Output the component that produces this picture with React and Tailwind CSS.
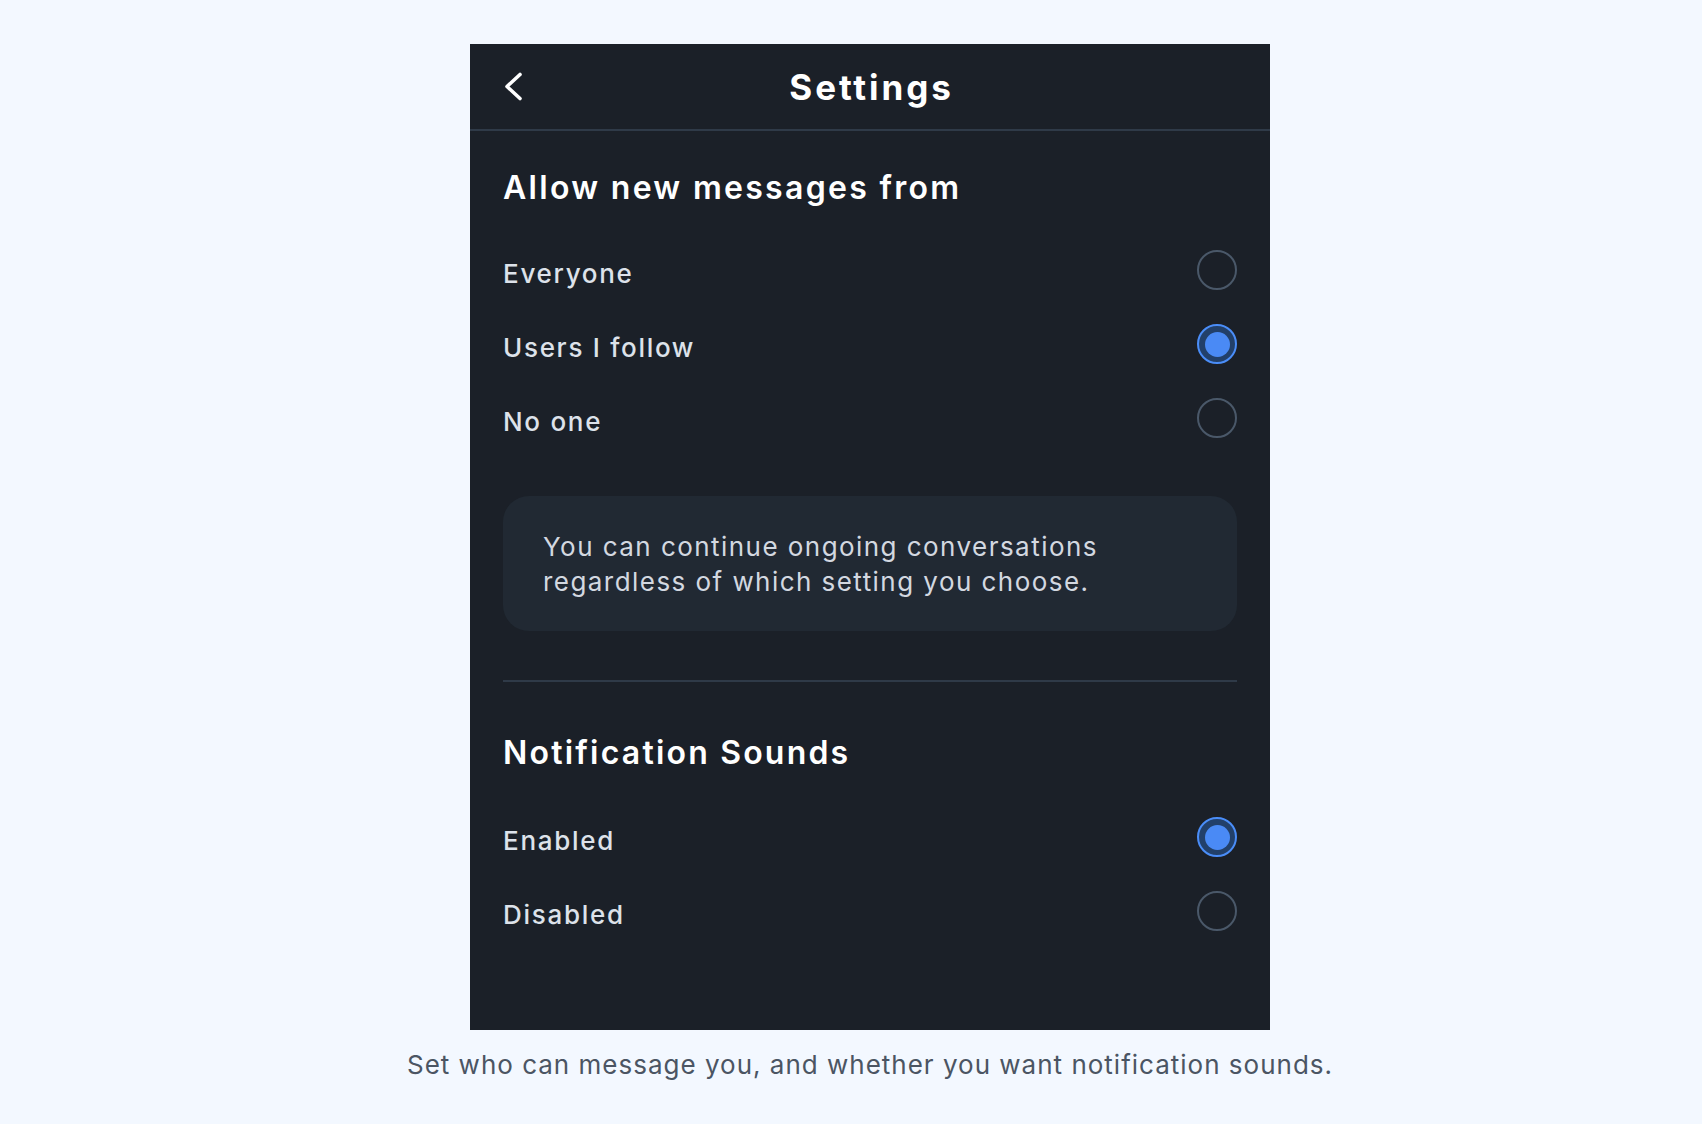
import React from "react";

function Radio({ checked }) {
  if (checked) {
    return (
      <div className="w-[40px] h-[40px] shrink-0 rounded-full border-2 border-[#4a8df8] bg-[#22406a] flex items-center justify-center">
        <div className="w-[25px] h-[25px] rounded-full bg-[#4a8af5]" />
      </div>
    );
  }
  return <div className="w-[40px] h-[40px] shrink-0 rounded-full border-2 border-[#4a5869]" />;
}

function Row({ label, checked }) {
  return (
    <div className="flex items-center justify-between h-[40px]">
      <span className="mt-[8px] text-[26px] leading-[34px] font-medium tracking-[1.7px] text-[#dde2ea]">{label}</span>
      <Radio checked={checked} />
    </div>
  );
}

export default function App() {
  return (
    <div
      className="min-h-[1124px] w-full bg-[#f3f8ff] flex flex-col items-center pt-[44px] pl-[38px]"
      style={{ fontFamily: "Inter, 'Noto Sans', sans-serif" }}
    >
      <div className="w-[800px] h-[986px] bg-[#1b2028] flex flex-col">
        <div className="relative h-[87px] border-b-2 border-[#2f3a48] flex items-center justify-center">
          <svg
            className="absolute left-[33px] top-[28px]"
            width="20"
            height="29"
            viewBox="0 0 20 29"
            fill="none"
          >
            <path d="M17 2.5 L4 14.5 L17 26.5" stroke="white" strokeWidth="3.6" strokeLinecap="round" strokeLinejoin="round" />
          </svg>
          <h1 className="pl-[3px] text-[35px] leading-[40px] font-bold tracking-[2.9px] text-white">Settings</h1>
        </div>
        <div className="px-[33px] pt-[37px] flex flex-col">
          <h2 className="text-[32px] leading-[40px] font-semibold tracking-[2.3px] text-white">Allow new messages from</h2>
          <div className="mt-[42px] flex flex-col gap-[34px]">
            <Row label="Everyone" />
            <Row label="Users I follow" checked />
            <Row label="No one" />
          </div>
          <div className="mt-[58px] rounded-[26px] bg-[#212933] px-[40px] pt-[33px] pb-[32px]">
            <p className="text-[26px] leading-[35px] tracking-[1.45px] text-[#d3d8e0]">
              You can continue ongoing conversations
              <br />
              regardless of which setting you choose.
            </p>
          </div>
          <div className="mt-[49px] h-[2px] bg-[#2f3a48]" />
          <h2 className="mt-[51px] text-[32px] leading-[40px] font-semibold tracking-[2.2px] text-white">Notification Sounds</h2>
          <div className="mt-[44px] flex flex-col gap-[34px]">
            <Row label="Enabled" checked />
            <Row label="Disabled" />
          </div>
        </div>
      </div>
      <p className="mt-[17px] text-[26px] leading-[35px] tracking-[1px] text-[#4b5563]">
        Set who can message you, and whether you want notification sounds.
      </p>
    </div>
  );
}
